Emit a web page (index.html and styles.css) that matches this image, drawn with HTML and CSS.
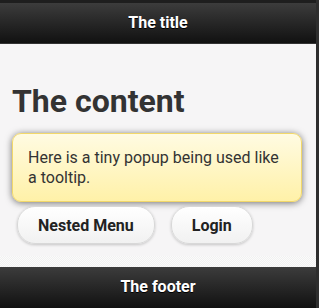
FILE: index.html
```html
<!DOCTYPE html>
<html>
<head>
<meta charset="utf-8">
<link rel="stylesheet" href="styles.css">
</head>
<body>
<div class="frame">
  <div class="page">
    <div class="topstrip"></div>
    <header class="bar header">The title</header>
    <main class="content">
      <h1 class="heading">The content</h1>
      <div class="popup">Here is a tiny popup being used like a tooltip.</div>
      <div class="actions">
        <a class="btn">Nested Menu</a>
        <a class="btn">Login</a>
      </div>
    </main>
    <div class="band"></div>
    <footer class="bar footer">The footer</footer>
  </div>
  <div class="edge"></div>
</div>
</body>
</html>
```

FILE: styles.css
```css
html, body {
  margin: 0;
  padding: 0;
  height: 308px;
  overflow: hidden;
  background: #222;
  font-family: Roboto, "Liberation Sans", sans-serif;
}
.frame {
  display: flex;
  height: 308px;
}
.page {
  width: 316px;
  display: flex;
  flex-direction: column;
}
.edge {
  flex: 1;
  background: #2e2e2e;
}
.topstrip {
  height: 3px;
  background: #1e1e1e;
}
.bar {
  display: flex;
  align-items: center;
  justify-content: center;
  color: #fff;
  font-weight: 700;
  font-size: 16px;
  text-shadow: 0 1px 0 #000;
  background: linear-gradient(#3c3c3c, #111);
  box-sizing: border-box;
}
.header {
  height: 41px;
  border-bottom: 1px solid #333;
  padding-bottom: 1px;
}
.content {
  flex: 1;
  background: #f6f5f6;
  padding: 16px 0 0;
  display: flex;
  flex-direction: column;
}
.heading {
  margin: 22px 0 13px 12px;
  font-size: 32px;
  line-height: 38px;
  font-weight: 700;
  color: #333;
}
.popup {
  margin: 0 14px 0 12px;
  border: 1px solid #f2d86a;
  border-radius: 9px;
  background: linear-gradient(#fffbe2, #fff1a8);
  box-shadow: 0 1px 7px rgba(0, 0, 0, 0.55);
  padding: 14px 15px 13px;
  font-size: 16px;
  line-height: 20px;
  color: #333;
}
.actions {
  display: flex;
  gap: 16px;
  margin: 4px 0 0 17px;
}
.btn {
  height: 38px;
  box-sizing: border-box;
  padding: 0 20px;
  display: flex;
  align-items: center;
  border: 1px solid #d8d8d8;
  border-radius: 18px;
  background: linear-gradient(#ffffff, #f1f1f1);
  box-shadow: 0 1px 3px rgba(0, 0, 0, 0.2);
  font-size: 16px;
  font-weight: 700;
  color: #222;
}
.band {
  height: 11px;
  background-color: #f9f9f9;
  background-image: repeating-conic-gradient(#f1f1f1 0 25%, #fbfbfb 0 50%);
  background-size: 2px 2px;
}
.footer {
  height: 41px;
  padding-bottom: 2px;
}
```
